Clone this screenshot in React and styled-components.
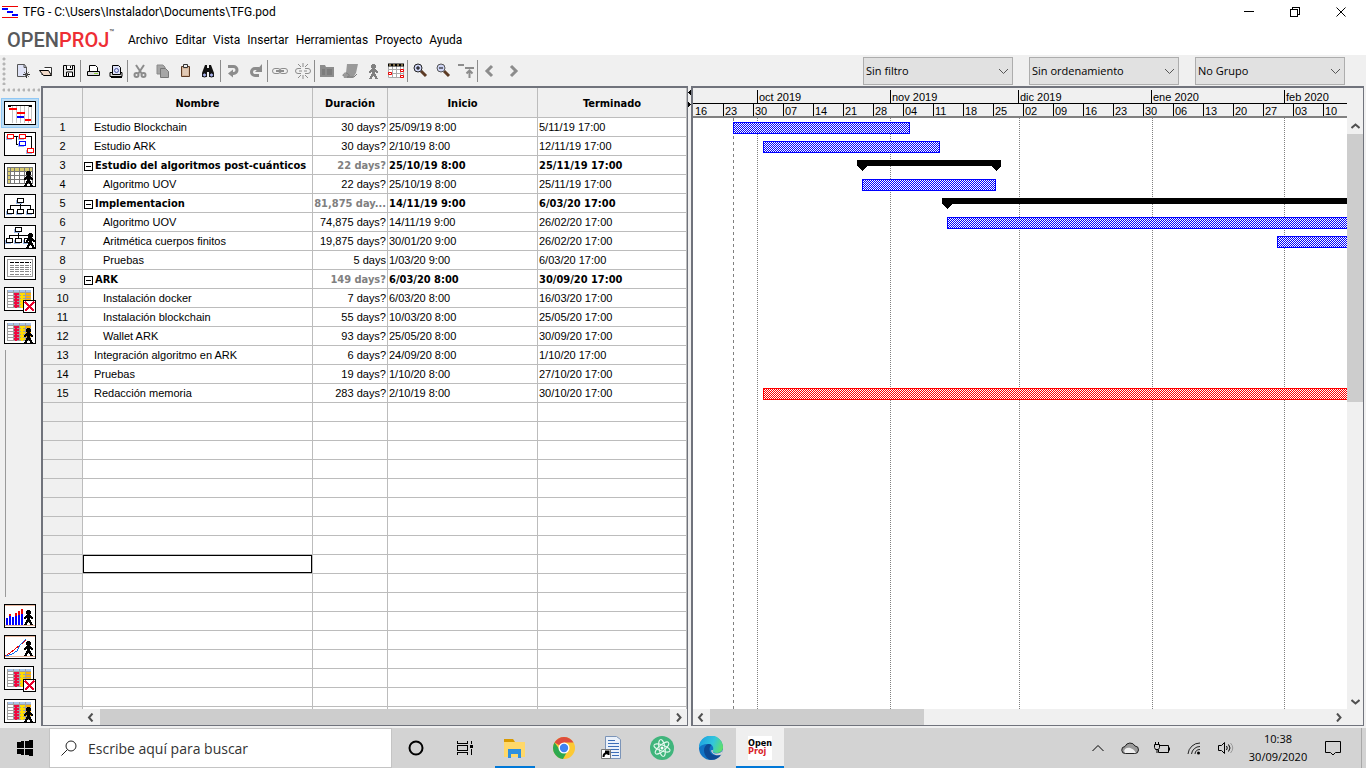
import React from "react";
import styled, { createGlobalStyle, css } from "styled-components";

const uiFont = '"Open Sans", "Noto Sans", sans-serif';
const menuFont = 'Roboto, "Open Sans", sans-serif';
const gridFont = '"Liberation Sans", Roboto, sans-serif';
const boldFont = '"DejaVu Sans Condensed", "Noto Sans", sans-serif';

const GlobalStyle = createGlobalStyle`
  *, *::before, *::after { box-sizing: border-box; }
  body { margin: 0; background: #f0f0f0; color: #000; font-family: ${uiFont}; }
  button, input, select { font: inherit; color: inherit; margin: 0; }
  svg { display: block; }
`;

/* ---------- shell ---------- */

const Shell = styled.div`
  display: flex;
  flex-direction: column;
  height: 100vh;
  overflow: hidden;
`;

const PlainButton = styled.button`
  display: flex;
  align-items: center;
  justify-content: center;
  padding: 0;
  border: 0;
  background: transparent;
`;

const TitleBar = styled.header`
  display: flex;
  align-items: center;
  height: 24px;
  padding: 0 2px;
  background: #fff;
`;

const WindowTitle = styled.h1`
  flex: 1;
  margin: 0 0 0 5px;
  font-family: ${menuFont};
  font-size: 12px;
  font-weight: 400;
  line-height: 24px;
`;

const WindowButton = styled(PlainButton)`
  width: 46px;
  height: 22px;
`;

const MenuBar = styled.nav`
  display: flex;
  align-items: center;
  height: 31px;
  padding-left: 7px;
  background: #fff;
`;

const Logo = styled.div`
  display: flex;
  width: 117px;
  font-family: Roboto, sans-serif;
  font-size: 20px;
  font-weight: 500;
  line-height: 34px;
  color: #58595b;
  span { color: #ee2e34; }
  sup { font-size: 8px; line-height: 20px; }
`;

const MenuItem = styled(PlainButton)`
  padding: 0 3px 0 4px;
  height: 24px;
  font-family: ${menuFont};
  font-size: 12px;
`;

/* ---------- toolbar ---------- */

const Toolbar = styled.div`
  display: flex;
  align-items: center;
  height: 31px;
  flex: none;
  background: #f0f0f0;
`;

const Grip = styled.div`
  flex: none;
  width: ${(p) => (p.$flat ? "40px" : "11px")};
  height: ${(p) => (p.$flat ? "10px" : "28px")};
  background: radial-gradient(circle at 4px 2px, #b4b4b4 1px, transparent 2px);
  background-size: ${(p) => (p.$flat ? "5px 10px" : "12px 5px")};
`;

const ToolGroup = styled.div`
  display: flex;
  align-items: center;
  border-right: 1px solid ${(p) => (p.$last ? "transparent" : "#8c8c8c")};
  height: 22px;
`;

const ToolButton = styled(PlainButton)`
  width: 23px;
  height: 22px;
`;

const Filters = styled.div`
  display: flex;
  gap: 16px;
  margin-left: auto;
  padding-right: 21px;
`;

const SelectBox = styled.div`
  position: relative;
  width: 150px;
  height: 28px;
  svg { position: absolute; right: 4px; top: 11px; pointer-events: none; }
`;

const Select = styled.select`
  appearance: none;
  width: 100%;
  height: 100%;
  padding: 0 20px 0 2px;
  border: 1px solid #adadad;
  border-radius: 0;
  background: #e1e1e1;
  font-size: 11px;
`;

/* ---------- workspace ---------- */

const Workspace = styled.main`
  flex: 1;
  display: grid;
  grid-template-columns: 41px 647px 3px minmax(0, 1fr);
  min-height: 0;
  padding: 0 2px 2px 0;
`;

const Rail = styled.aside`
  display: flex;
  flex-direction: column;
  align-items: flex-start;
  padding-top: 2px;
`;

const RailButton = styled(PlainButton)`
  flex: none;
  width: 38px;
  height: ${(p) => (p.$tall ? "33px" : "31px")};
  align-items: flex-start;
  padding-top: 3px;
  margin-left: 1px;
  &:last-child { height: 30px; }
  ${(p) => p.$active && css`
    padding-top: 2px;
    height: 30px;
    margin-bottom: 1px;
    background: #bcdcf4;
    border: 1px solid #90c8f6;
  `}
`;

const RailRule = styled.div`
  flex: 1;
  width: 1px;
  margin: 2px 0 4px 5px;
  background: #9a9a9a;
`;

const Panel = styled.section`
  display: flex;
  flex-direction: column;
  min-width: 0;
  min-height: 0;
  border: solid #70737c;
  border-width: 2px 1px 1px 2px;
  background: #fff;
`;

const Splitter = styled.div`
  display: flex;
  flex-direction: column;
  gap: 5px;
  padding-top: 3px;
`;

const SheetView = styled.div`
  flex: 1;
  min-height: 0;
  overflow: hidden;
`;

const Sheet = styled.table`
  width: 100%;
  table-layout: fixed;
  border-collapse: separate;
  border-spacing: 0;
  font-family: ${gridFont};
  font-size: 11px;
  line-height: 18px;
`;

const cell = css`
  height: 19px;
  padding: 0 1px;
  overflow: hidden;
  white-space: nowrap;
  border-right: 1px solid #bcbcbc;
  border-bottom: 1px solid #bcbcbc;
`;

const boldText = css`
  padding-top: 2px;
  font-family: ${boldFont};
  font-weight: 700;
  line-height: 16px;
`;

const HeadCell = styled.th`
  ${cell}
  ${boldText}
  height: 30px;
  background: #f0f0f0;
`;

const RowNumber = styled.th`
  ${cell}
  background: #f0f0f0;
  font-weight: 400;
  text-align: center;
`;

const Cell = styled.td`
  ${cell}
  text-align: ${(p) => (p.$right ? "right" : "left")};
  ${(p) => p.$bold && boldText}
  ${(p) => p.$muted && "color: #808080;"}
`;

const TaskName = styled.div`
  display: flex;
  align-items: center;
  gap: 2px;
  padding-left: ${(p) => [0, 10, 19][p.$level]}px;
`;

const Toggle = styled(PlainButton)`
  flex: none;
  width: 9px;
  height: 9px;
  border: 1px solid #000;
  background: linear-gradient(#000, #000) center / 5px 1px no-repeat #fff;
`;

const CellEditor = styled.input`
  display: block;
  width: calc(100% + 2px);
  height: 18px;
  margin: 0 -1px;
  padding: 0 2px;
  border: 1px solid #000;
  outline: 0;
`;

/* ---------- scroll bars ---------- */

const HScroll = styled.div`
  display: flex;
  align-items: center;
  flex: none;
  height: 16px;
  margin-left: ${(p) => (p.$indent ? "40px" : "0")};
  padding-right: ${(p) => (p.$corner ? "16px" : "0")};
  background: #f0f0f0;
`;

const HScrollRow = styled.div`
  flex: none;
  background: #f0f0f0;
`;

const Track = styled.div`
  flex: 1;
  align-self: stretch;
  display: flex;
`;

const Thumb = styled.div`
  background: #cdcdcd;
  flex: 0 0 ${(p) => p.$size};
`;

const ScrollButton = styled(PlainButton)`
  width: 17px;
  height: 16px;
  flex: none;
`;

const VScroll = styled.div`
  display: flex;
  flex-direction: column;
  width: 16px;
  flex: none;
  background: #f0f0f0;
`;

const VTrack = styled.div`
  flex: 1;
  display: flex;
  flex-direction: column;
`;

/* ---------- gantt ---------- */

const GanttBody = styled.div`
  flex: 1;
  display: flex;
  min-height: 0;
`;

const Timeline = styled.div`
  flex: none;
  display: flex;
  background: #f0f0f0;
  padding-right: 16px;
  font-family: ${gridFont};
  font-size: 11px;
`;

const Scale = styled.div`
  flex: 1;
  min-width: 0;
  overflow: hidden;
  border-bottom: 2px solid #808080;
`;

const Months = styled.div`
  display: flex;
  height: 16px;
  padding-top: 2px;
  border-bottom: 1px solid #000;
  line-height: 14px;
`;

const Weeks = styled.div`
  display: flex;
  height: 12px;
  line-height: 14px;
`;

const Tick = styled.div`
  flex: 0 0 ${(p) => p.$width}px;
  padding-left: 1px;
  white-space: nowrap;
  border-left: 1px solid ${(p) => (p.$blank ? "transparent" : "#000")};
`;

const ChartArea = styled.div`
  flex: 1;
  min-width: 0;
  overflow: hidden;
`;

/* ---------- task bar ---------- */

const TaskBar = styled.footer`
  display: flex;
  flex: none;
  height: 40px;
  background: #d3d3d3;
`;

const StartButton = styled(PlainButton)`
  width: 49px;
`;

const Search = styled.label`
  display: flex;
  align-items: center;
  gap: 11px;
  width: 343px;
  padding-left: 11px;
  background: #fff;
  border: 1px solid #c4c4c4;
  input {
    flex: 1;
    min-width: 0;
    border: 0;
    outline: 0;
    padding: 0;
    background: transparent;
    font-size: 14px;
  }
  input::placeholder { color: #333; opacity: 1; }
`;

const Apps = styled.div`
  display: flex;
  gap: 1px;
  margin-left: ${(p) => (p.$spaced ? "2px" : "0")};
`;

const AppButton = styled(PlainButton)`
  width: 48px;
  height: 40px;
  background: ${(p) => (p.$active ? "#efefef" : "transparent")};
  background-image: ${(p) => (p.$running ? "linear-gradient(#0078d7, #0078d7)" : "none")};
  background-repeat: no-repeat;
  background-position: center bottom;
  background-size: ${(p) => (p.$active ? "48px" : "40px")} 2px;
`;

const OpenProjTile = styled.span`
  display: flex;
  flex-direction: column;
  width: 24px;
  height: 24px;
  padding-top: 3px;
  background: #fff;
  font-family: "DejaVu Sans Condensed", "Noto Sans", sans-serif;
  font-size: 9px;
  font-weight: 700;
  line-height: 8px;
  text-align: left;
  b { color: #d9232a; }
`;

const Tray = styled.div`
  display: flex;
  align-items: center;
  margin-left: auto;
`;

const TrayButton = styled(PlainButton)`
  width: 32px;
  height: 40px;
`;

const Clock = styled.time`
  width: 72px;
  margin-right: 3px;
  font-size: 11px;
  line-height: 18px;
  text-align: center;
`;

const Peek = styled.div`
  width: 5px;
  align-self: stretch;
  border-left: 1px solid #a8a8a8;
  margin-left: 12px;
`;

/* ---------- drawings ---------- */

const Icon = ({ w = 16, h = 16, crisp, children }) => (
  <svg width={w} height={h} viewBox={`0 0 ${w} ${h}`} fill="none" aria-hidden="true"
    shapeRendering={crisp ? "crispEdges" : "auto"}>{children}</svg>
);

const chevrons = {
  left: "M5.500 .5L2 4.500l3.500 4",
  right: "M3 .5l3.500 4L3 8.500",
  up: "M.5 6l4-3.500 4 3.500",
  down: "M.5 3l4 3.500 4-3.500",
};
const Chevron = ({ to, width = 2, color = "#505050" }) => (
  <Icon w={9} h={9}><path d={chevrons[to]} stroke={color} strokeWidth={width} /></Icon>
);

const G = "#8c8c8c";

const Man = ({ x = 0, y = 0, fill = "#000" }) => (
  <path
    transform={`translate(${x} ${y})`}
    fill={fill}
    d="M3 0h3v1H3zM2 1h5v3H2zM3 4h3v1H3zM2 5h5v1H2zM1 6h7v1H1zM0 7h9v1H0zM0 8h2v1H0zM3 8h3v2H3zM7 8h2v1H7zM2 10h5v2H2zM1 12h3v1H1zM5 12h3v1H5zM1 13h2v1H1zM6 13h2v1H6zM0 14h3v1H0zM6 14h3v1H6z"
  />
);

const PrinterBase = () => (
  <>
    <path d="M2 9.500h12v4H2z" fill="#dcdcdc" stroke="#000" />
    <path d="M3 14.500h11" stroke="#000" />
  </>
);

const tools = {
  nuevo: <><path d="M2.500 1.500h7l2 3v9h-9z" fill="#dfe3f7" stroke="#555" /><path d="M9 1.500v3h3" stroke="#555" /><path d="M11.500 8v7M8 11.500h7" stroke="#333" /><path d="M9 9l5 5M14 9l-5 5" stroke="#777" /></>,
  abrir: <><path d="M6.500 4.500h7v7h-10" stroke="#333" fill="#fff" /><path d="M1.500 7.500h9l3 5h-8z" fill="#f1d9c8" stroke="#000" /></>,
  guardar: <><path d="M2.500 2.500h11v11h-11z" fill="#e8e8e8" stroke="#000" /><path d="M5.500 2.500v4h6v-4M5.500 13v-4h6v4" fill="#fff" stroke="#000" /><path d="M9.500 3v2M7.500 10v3" stroke="#000" /></>,
  imprimir: <><path d="M4.500 8V2.500h6l2 2V8" fill="#fff" stroke="#000" /><path d="M2.500 8.500h12v4h-12z" fill="#dcdcdc" stroke="#000" /><path d="M9 10.500h4" stroke="#8ccf3c" strokeWidth="1" /></>,
  previa: <><PrinterBase /><path d="M4.500 2.500h6l2 2v7h-8z" fill="#dfe3f7" stroke="#000" /><circle cx="8.500" cy="7.500" r="2" stroke="#4a55a0" /></>,
  cortar: <><path d="M4 2l6 9M12 2L6 11" stroke={G} strokeWidth="2" /><circle cx="4.500" cy="12" r="2" stroke={G} strokeWidth="2" /><circle cx="11.500" cy="12" r="2" stroke={G} strokeWidth="2" /></>,
  copiar: <><path d="M2 2h6l2 2v7H2z" fill="#a6a6a6" stroke={G} /><path d="M5.500 5.500h5l3 3v6h-8z" fill="#a6a6a6" stroke="#777" /></>,
  pegar: <><path d="M3.500 3.500h8v10h-8z" fill="#d6b79c" stroke="#5c3a24" /><path d="M5.500 1.500h4v3h-4z" fill="#eee" stroke="#333" /><path d="M5 7h5M5 9h5M5 11h5" stroke="#ecdccf" /></>,
  buscar: <><path d="M4 2h2v3h2V2h2l3 8v4H8V9H6v5H1v-4z" fill="#111" /><circle cx="3.500" cy="12" r="2" fill="#aab4f0" stroke="#111" /><circle cx="10.500" cy="12" r="2" fill="#aab4f0" stroke="#111" /></>,
  deshacer: <><path d="M3 3.500h5.500a3.500 3.500 0 010 7H6" stroke={G} strokeWidth="3" /><path d="M3 10.500l5-4v8z" fill={G} /></>,
  rehacer: <><path d="M11 12.500H7a3.500 3.500 0 010-7h4" stroke={G} strokeWidth="3" /><path d="M14 1v8H7z" fill={G} /></>,
  vincular: <><rect x="0.500" y="5.500" width="8" height="5" rx="2.500" stroke={G} /><rect x="7.500" y="5.500" width="8" height="5" rx="2.500" stroke={G} /><path d="M4 8h8" stroke={G} strokeWidth="2" /></>,
  desvincular: <><path d="M6 5.500H3a2.500 2.500 0 000 5h3M10 5.500h3a2.500 2.500 0 010 5h-3M4 8h3M9 8h3M8 0v4M8 12v4M3 1l3 3M13 1l-3 3M3 15l3-3M13 15l-3-3" stroke={G} /></>,
  informacion: <><path d="M1 2h5l1 2h8v10H1z" fill={G} /><path d="M3 7h3M8 7h5M3 9h3M8 9h5M3 11h3M8 11h5" stroke="#6d6d6d" /></>,
  notas: <><path d="M5 1h11l-2 9-3 5H2l-1-3 3-2z" fill="#999" /><path d="M1 13c0-3 3-4 5-2 2 1 1 3-1 3h7l3-3" stroke="#7c7c7c" /></>,
  recursos: <Man x={4} y={1} fill="#808080" />,
  calendario: <><path d="M.5 2.500h15v12H.5z" fill="#fff" stroke="#aaa" /><path d="M0 6.500h16M0 10.500h16M4.500 3v12M8.500 3v12M12.500 3v12" stroke="#aaa" /><path d="M0 2h16" stroke="#000" strokeWidth="3" /><path d="M1 2h14" stroke="#f5d58c" strokeDasharray="2 2" /><path d="M.5 9.500h3v2h-3zM12.500 6.500h3v2h-3zM12.500 12.500h3v2h-3z" stroke="#e00" fill="#fff" /></>,
  acercar: <><path d="M9 8l5 5" stroke="#5c3a24" strokeWidth="3" /><circle cx="6" cy="5" r="4" fill="#cdd3f4" stroke="#222" /><path d="M4 5h4M6 3v4" stroke="#000" /></>,
  alejar: <><path d="M9 8l5 5" stroke="#5c3a24" strokeWidth="3" /><circle cx="6" cy="5" r="4" fill="#cdd3f4" stroke="#555" /><path d="M4 5h4" stroke="#000" /></>,
  desplazar: <path d="M0 2h6M7 5h9M11.500 7v8M8.500 10.500l3-3 3 3" stroke={G} strokeWidth="2" />,
  anterior: <path d="M10 3L5 8l5 5" stroke={G} strokeWidth="3" />,
  siguiente: <path d="M6 3l5 5-5 5" stroke={G} strokeWidth="3" />,
};

const toolGroups = [
  ["nuevo", "abrir", "guardar"],
  ["imprimir", "previa"],
  ["cortar", "copiar", "pegar", "buscar"],
  ["deshacer", "rehacer"],
  ["vincular", "desvincular"],
  ["informacion", "notas", "recursos", "calendario"],
  ["acercar", "alejar", "desplazar"],
  ["anterior", "siguiente"],
];

const Frame = ({ children, h = 24, w = 32 }) => (
  <Icon w={32} h={h} crisp>
    <rect x="0.5" y="0.5" width={w - 1} height="23" fill="#fff" stroke="#000" />
    {children}
  </Icon>
);

const Node = ({ x, y, c = "#000" }) => (
  <>
    <rect x={x - 1} y={y + 2} width="6" height="4" fill="#9db9e6" />
    <rect x={x + 0.5} y={y + 0.5} width="6" height="4" fill="#fff" stroke={c} />
  </>
);

const UsageGrid = () => (
  <>
    <path d="M3 3h24v18H3z" fill="#a0a0a0" />
    <path d="M4 4h5M10 4h5M16 4h5M22 4h5" stroke="#a8c4ea" strokeWidth="2" />
    {[["#fff", 4], ["#f00840", 10], ["#ffdc00", 16], ["#ffb000", 22]].map(([fill, x]) =>
      [6, 9, 12, 15, 18].map((y) => <rect key={`${x}-${y}`} x={x} y={y} width="5" height="2" fill={fill} />)
    )}
    <path d="M12 6v15" stroke="#f00840" strokeWidth="2" />
    <path d="M18 6v15" stroke="#ffdc00" strokeWidth="2" />
  </>
);

const Cross = () => (
  <>
    <rect x="19.500" y="13.500" width="12" height="12" fill="#fff" stroke="#000" />
    <path d="M21 15l9 9M30 15l-9 9" stroke="#e8002c" strokeWidth="2" />
  </>
);

const Tree = () => (
  <>
    <path d="M16.500 8v3M6.500 15v-4h20v4M16.500 11v4" stroke="#000" />
    <Node x={13} y={4} /><Node x={3} y={15} /><Node x={13} y={15} /><Node x={23} y={15} />
  </>
);

const views = {
  gantt: <Frame><path d="M8.500 5v17M12.500 5v17M16.500 5v17M20.500 5v17M24.500 5v17M27.500 5v17" stroke="#c4c4c4" /><path d="M4 4.500h24" stroke="#000" /><path d="M4 4h3v2H4zM25 4h3v2h-3z" fill="#000" /><path d="M5 8h8M13 12h8M21 19h6" stroke="#f00" strokeWidth="2" /><path d="M13 16h7" stroke="#00f" strokeWidth="2" /></Frame>,
  red: <Frame><path d="M9 4.500h6M12.500 5v7h3M22 4.500h5v12" stroke="#000" /><Node x={3} y={2} c="#f00" /><Node x={15} y={2} c="#f00" /><Node x={15} y={9} c="#00f" /><Node x={23} y={16} c="#f00" /></Frame>,
  recursos: <Frame><path d="M3 4h26v4H3zM3 4h3v17H3z" fill="#d8cc70" /><path d="M3 4.500h26M3 8.500h26M3 12.500h26M3 16.500h26M3 20.500h26M3.500 4v17M6.500 4v17M10.500 4v17M15.500 4v17M20.500 4v17M25.500 4v17M28.500 4v17" stroke="#777" /><Man x={20} y={8} /></Frame>,
  edt: <Frame><Tree /></Frame>,
  edr: <Frame><path d="M14.500 7v3M5.500 14v-4h19v4M14.500 10v4" stroke="#000" /><Node x={11} y={2} /><Node x={2} y={13} /><Node x={11} y={13} /><Node x={20} y={13} /><Man x={22} y={8} /></Frame>,
  informe: <Frame><path d="M3.500 3.500h25v17h-25z" stroke="#999" /><path d="M6 6.500h21" stroke="#000" strokeDasharray="4 1" /><path d="M6 9.500h21M6 11.500h21M6 13.500h21M6 15.500h21M6 18.500h21" stroke="#888" strokeDasharray="4 1" /></Frame>,
  usoTareas: <Frame h={26} w={30}><UsageGrid /><Cross /></Frame>,
  usoRecursos: <Frame><UsageGrid /><Man x={20} y={8} /></Frame>,
  histograma: <Frame><path d="M1 1.500h30M1 21.500h30" stroke="#e8b8a0" /><path d="M3 21v-7M6 21V12M9 21v-8M12 21V12M15 21V11M18 21V10" stroke="#00f" strokeWidth="2" /><path d="M6 12v-2M12 12V9M15 11V7M18 10V5" stroke="#e00" strokeWidth="2" /><Man x={20} y={6} /></Frame>,
  graficos: <Frame><path d="M1 1.500h30M1 21.500h30" stroke="#e8b8a0" /><path d="M1 21l5-3 5-4 5-4 6-5" stroke="#e00" /><path d="M2 21l6-2 5-3 3-6 6-6" stroke="#0a6cf0" /><Man x={20} y={6} /></Frame>,
};

const ViewButton = ({ name, active, tall, icon }) => (
  <RailButton aria-label={name} $active={active} $tall={tall}>{views[icon || name]}</RailButton>
);

/* ---------- data ---------- */

const tasks = [
  ["Estudio Blockchain", "30 days?", "25/09/19 8:00", "5/11/19 17:00", 1],
  ["Estudio ARK", "30 days?", "2/10/19 8:00", "12/11/19 17:00", 1],
  ["Estudio del algoritmos post-cuánticos", "22 days?", "25/10/19 8:00", "25/11/19 17:00", 0],
  ["Algoritmo UOV", "22 days?", "25/10/19 8:00", "25/11/19 17:00", 2],
  ["Implementacion", "81,875 day...", "14/11/19 9:00", "6/03/20 17:00", 0],
  ["Algoritmo UOV", "74,875 days?", "14/11/19 9:00", "26/02/20 17:00", 2],
  ["Aritmética cuerpos finitos", "19,875 days?", "30/01/20 9:00", "26/02/20 17:00", 2],
  ["Pruebas", "5 days", "1/03/20 9:00", "6/03/20 17:00", 2],
  ["ARK", "149 days?", "6/03/20 8:00", "30/09/20 17:00", 0],
  ["Instalación docker", "7 days?", "6/03/20 8:00", "16/03/20 17:00", 2],
  ["Instalación blockchain", "55 days?", "10/03/20 8:00", "25/05/20 17:00", 2],
  ["Wallet ARK", "93 days?", "25/05/20 8:00", "30/09/20 17:00", 2],
  ["Integración algoritmo en ARK", "6 days?", "24/09/20 8:00", "1/10/20 17:00", 1],
  ["Pruebas", "19 days?", "1/10/20 8:00", "27/10/20 17:00", 1],
  ["Redacción memoria", "283 days?", "2/10/19 8:00", "30/10/20 17:00", 1],
];
const blankRows = Array.from({ length: 17 }, (_, i) => i);
const editedRow = 8;

const months = [["", 64], ["oct 2019", 133], ["nov 2019", 128], ["dic 2019", 133], ["ene 2020", 133], ["feb 2020", 133]];
const weeks = "16 23 30 07 14 21 28 04 11 18 25 02 09 16 23 30 06 13 20 27 03 10".split(" ");

const bars = [
  { row: 0, from: 40, to: 217 },
  { row: 1, from: 70, to: 247 },
  { row: 2, from: 164, to: 308, summary: true },
  { row: 3, from: 169, to: 303 },
  { row: 4, from: 249, to: 1400, summary: true },
  { row: 5, from: 254, to: 1400 },
  { row: 6, from: 584, to: 1400 },
  { row: 14, from: 70, to: 1400, critical: true },
];

const Chart = () => (
  <svg width="1400" height="900" shapeRendering="crispEdges" role="img" aria-label="Diagrama de Gantt">
    <defs>
      {[["normal", "#00f"], ["critical", "#f00"]].map(([id, c]) => (
        <pattern key={id} id={id} width="2" height="2" patternUnits="userSpaceOnUse">
          <rect width="2" height="2" fill="#fff" />
          <rect width="1" height="1" fill={c} />
          <rect x="1" y="1" width="1" height="1" fill={c} />
        </pattern>
      ))}
    </defs>
    <path d="M40.500 0v900" stroke="#808080" strokeDasharray="3 3" />
    {[64, 197, 326, 459, 591].map((x) => (
      <path key={x} d={`M${x}.5 0v900`} stroke="#808080" strokeDasharray="1 1" />
    ))}
    {bars.map(({ row, from, to, summary, critical }) => {
      const y = row * 19 + 4;
      if (summary) {
        return (
          <path key={row} d={`M${from} ${y}H${to}v6l-5 5l-5 -5H${from + 10}l-5 5l-5 -5z`} fill="#000" />
        );
      }
      return (
        <rect key={row} x={from + 0.5} y={y + 0.5} width={to - from - 1} height="11"
          fill={critical ? "url(#critical)" : "url(#normal)"} stroke={critical ? "#f00" : "#00f"} />
      );
    })}
  </svg>
);

const apps = {
  explorer: <Icon w={24} h={24}><path d="M1 4h9l2 2h10v15H1z" fill="#ffd869" /><path d="M1 3h9l2 3H1z" fill="#d99a00" /><path d="M5 13h13v9h-3v-4H8v4H5z" fill="#2e8fdf" /></Icon>,
  chrome: <Icon w={24} h={24}><circle cx="12" cy="12" r="11" fill="#fcc934" /><path d="M12 12L2.500 6.500A11 11 0 0121.500 6.500H12z" fill="#de4d3e" /><path d="M2.500 6.500A11 11 0 0011 23l5-9-4-2-4 2z" fill="#2da94f" /><circle cx="12" cy="12" r="5.500" fill="#fff" /><circle cx="12" cy="12" r="4.200" fill="#3f83f1" /></Icon>,
  writer: <Icon w={24} h={24}><path d="M4.500 .5h11l4 3v19h-15z" fill="#eaf1fb" stroke="#7b94b8" /><path d="M7 4.500h7M7 7.500h11M7 10.500h11M7 13.500h11M9 16.500h9M11 19.500h7" stroke="#3c6eb8" /><path d="M.5 13.500h9v9h-9z" fill="#fff" stroke="#777" /><path d="M2.500 21c0-3 1-4 4-4M4 15.500h3.500V19" stroke="#000" strokeWidth="2" /></Icon>,
  atom: <Icon w={24} h={24}><circle cx="12" cy="12" r="12" fill="#40b57c" /><g stroke="#e4f8ee"><ellipse cx="12" cy="12" rx="8.500" ry="3" transform="rotate(20 12 12)" /><ellipse cx="12" cy="12" rx="8.500" ry="3" transform="rotate(80 12 12)" /><ellipse cx="12" cy="12" rx="8.500" ry="3" transform="rotate(140 12 12)" /></g><circle cx="12" cy="12" r="1.500" fill="#fff" /></Icon>,
  edge: (
    <Icon w={24} h={24}>
      <defs>
        <linearGradient id="edgeTop" x1="0" y1="0" x2="24" y2="10" gradientUnits="userSpaceOnUse"><stop stopColor="#1b9de2" /><stop offset=".6" stopColor="#33c6dc" /><stop offset="1" stopColor="#5fe06a" /></linearGradient>
      </defs>
      <circle cx="12" cy="12" r="12" fill="#1173c4" />
      <path d="M0 12A12 12 0 0124 11c0 4-3 6-7 6-3 0-4-1-3-3 1-3-1-6-5-6-5 0-8 2-9 4z" fill="url(#edgeTop)" />
      <path d="M9 8c-5 2-6 10 1 15.500A12 12 0 0022.500 18c-6 3-12 1-12-5 0-2 1-3 2-4-1-1-2-1-3.500-1z" fill="#0d4a94" />
      <path d="M14 14c-1 2 0 3.500 3 3.500 3.500 0 6-1.500 7-4l-1 5c-5 2-10 0-11-4z" fill="#d3d3d3" />
    </Icon>
  ),
};

const Scroller = ({ thumb, label }) => (
  <>
    <ScrollButton aria-label={`${label} a la izquierda`}><Chevron to="left" /></ScrollButton>
    <Track><Thumb $size={thumb} /></Track>
    <ScrollButton aria-label={`${label} a la derecha`}><Chevron to="right" /></ScrollButton>
  </>
);

const Filter = ({ label, value }) => (
  <SelectBox>
    <Select aria-label={label} defaultValue={value}><option>{value}</option></Select>
    <Icon w={11} h={7}><path d="M1 1l4.500 4.500L10 1" stroke="#555" /></Icon>
  </SelectBox>
);

export default function App() {
  return (
    <Shell>
      <GlobalStyle />
      <TitleBar>
        <Icon w={16} h={16} crisp><path d="M0 2.500h16M0 13.500h16" stroke="#e00" /><path d="M0 5h6M5 8h6M10 11h6" stroke="#00f" strokeWidth="2" /></Icon>
        <WindowTitle>TFG - C:\Users\Instalador\Documents\TFG.pod</WindowTitle>
        <WindowButton aria-label="Minimizar"><Icon w={11} h={11} crisp><path d="M0 4.500h10" stroke="#000" /></Icon></WindowButton>
        <WindowButton aria-label="Restaurar"><Icon w={11} h={11} crisp><path d="M.5 2.500h7v7h-7zM2.500 2V.5h7v7H8" stroke="#000" /></Icon></WindowButton>
        <WindowButton aria-label="Cerrar"><Icon w={11} h={11}><path d="M.5 .5l9 9M9.500 .5l-9 9" stroke="#000" /></Icon></WindowButton>
      </TitleBar>
      <MenuBar>
        <Logo>OPEN<span>PROJ</span><sup>™</sup></Logo>
        {["Archivo", "Editar", "Vista", "Insertar", "Herramientas", "Proyecto", "Ayuda"].map((m) => (
          <MenuItem key={m}>{m}</MenuItem>
        ))}
      </MenuBar>
      <Toolbar>
        <Grip />
        {toolGroups.map((group, i) => (
          <ToolGroup key={group[0]} $last={i === toolGroups.length - 1}>
            {group.map((name) => (
              <ToolButton key={name} aria-label={name}><Icon>{tools[name]}</Icon></ToolButton>
            ))}
          </ToolGroup>
        ))}
        <Filters>
          <Filter label="Filtro" value="Sin filtro" />
          <Filter label="Orden" value="Sin ordenamiento" />
          <Filter label="Grupo" value="No Grupo" />
        </Filters>
      </Toolbar>

      <Workspace>
        <Rail>
          <Grip $flat />
          <ViewButton name="gantt" active />
          <ViewButton name="red" />
          <ViewButton name="recursos" />
          <ViewButton name="edt" />
          <ViewButton name="edr" />
          <ViewButton name="informe" />
          <ViewButton name="usoTareas" tall />
          <ViewButton name="usoRecursos" />
          <RailRule />
          <ViewButton name="histograma" />
          <ViewButton name="graficos" />
          <ViewButton name="detalle de tareas" icon="usoTareas" tall />
          <ViewButton name="detalle de recursos" icon="usoRecursos" />
        </Rail>

        <Panel>
          <SheetView>
            <Sheet>
              <colgroup>
                <col style={{ width: 40 }} /><col style={{ width: 230 }} /><col style={{ width: 75 }} />
                <col style={{ width: 150 }} /><col />
              </colgroup>
              <thead>
                <tr>
                  <HeadCell aria-label="Fila" />
                  {["Nombre", "Duración", "Inicio", "Terminado"].map((h) => <HeadCell key={h} scope="col">{h}</HeadCell>)}
                </tr>
              </thead>
              <tbody>
                {tasks.map(([name, duration, start, end, level], i) => {
                  const bold = level === 0;
                  return (
                    <tr key={i}>
                      <RowNumber scope="row">{i + 1}</RowNumber>
                      <Cell $bold={bold}>
                        <TaskName $level={level}>{bold && <Toggle aria-label="Contraer" />}{name}</TaskName>
                      </Cell>
                      <Cell $bold={bold} $muted={bold} $right>{duration}</Cell>
                      <Cell $bold={bold}>{start}</Cell>
                      <Cell $bold={bold}>{end}</Cell>
                    </tr>
                  );
                })}
                {blankRows.map((i) => (
                  <tr key={i}>
                    <RowNumber />
                    <Cell>{i === editedRow && <CellEditor aria-label="Nombre de la tarea" />}</Cell>
                    <Cell /><Cell /><Cell />
                  </tr>
                ))}
              </tbody>
            </Sheet>
          </SheetView>
          <HScrollRow><HScroll $indent><Scroller thumb="100%" label="Tabla" /></HScroll></HScrollRow>
        </Panel>

        <Splitter>
          <Icon w={3} h={7} crisp><path d="M3 0v7L0 3.500z" fill="#000" /></Icon>
          <Icon w={3} h={7} crisp><path d="M0 0v7l3-3.500z" fill="#000" /></Icon>
        </Splitter>

        <Panel>
          <Timeline>
            <Scale>
              <Months>{months.map(([m, w]) => <Tick key={m} $width={w} $blank={!m}>{m}</Tick>)}</Months>
              <Weeks>{weeks.map((w, i) => <Tick key={i} $width={30} $blank={i === 0}>{w}</Tick>)}</Weeks>
            </Scale>
          </Timeline>
          <GanttBody>
            <ChartArea><Chart /></ChartArea>
            <VScroll>
              <ScrollButton aria-label="Subir"><Chevron to="up" /></ScrollButton>
              <VTrack><Thumb $size="48%" /></VTrack>
              <ScrollButton aria-label="Bajar"><Chevron to="down" /></ScrollButton>
            </VScroll>
          </GanttBody>
          <HScroll $corner><Scroller thumb="34.5%" label="Diagrama" /></HScroll>
        </Panel>
      </Workspace>

      <TaskBar>
        <StartButton aria-label="Inicio"><Icon crisp><path d="M0 2l7-1v6.500H0zM8 1l8-1v7.500H8zM0 8.500h7V15l-7-1zM8 8.500h8V16l-8-1z" fill="#000" /></Icon></StartButton>
        <Search>
          <Icon w={16} h={16}><circle cx="10" cy="6" r="5" stroke="#222" /><path d="M6.500 9.500L.5 15.500" stroke="#222" /></Icon>
          <input placeholder="Escribe aquí para buscar" aria-label="Buscar" />
        </Search>
        <Apps>
          <AppButton aria-label="Cortana"><Icon><circle cx="8" cy="8" r="6.500" stroke="#000" strokeWidth="2" /></Icon></AppButton>
          <AppButton aria-label="Vista de tareas"><Icon w={18} crisp><path d="M1.500 1v2.500h10V1M1.500 5.500h10v5h-10zM1.500 15v-2.500h10V15M15.500 1v3M15.500 9v6" stroke="#000" /><path d="M14 5h3v3h-3z" fill="#000" /></Icon></AppButton>
        </Apps>
        <Apps $spaced>
          <AppButton aria-label="Explorador" $running>{apps.explorer}</AppButton>
          <AppButton aria-label="Chrome">{apps.chrome}</AppButton>
          <AppButton aria-label="Documento">{apps.writer}</AppButton>
          <AppButton aria-label="Atom">{apps.atom}</AppButton>
          <AppButton aria-label="Edge">{apps.edge}</AppButton>
          <AppButton $active $running><OpenProjTile>Open<b>Proj</b></OpenProjTile></AppButton>
        </Apps>
        <Tray>
          <TrayButton aria-label="Iconos ocultos"><Icon w={12} h={8}><path d="M.5 7L6 1.500 11.500 7" stroke="#000" /></Icon></TrayButton>
          <TrayButton aria-label="OneDrive"><Icon w={18} h={12}><path d="M4.500 11.500a3.500 3.500 0 01-.5-7 5.500 5.500 0 0110-.5 3.700 3.700 0 01-.5 7.500z" fill="#999" stroke="#222" /><path d="M4 11a3 3 0 010-4c4-3 9 0 11 4z" fill="#eee" /></Icon></TrayButton>
          <TrayButton aria-label="Batería"><Icon w={18} h={12}><path d="M7 3.500h8.500v7H5.500V8M16.500 5.500v3" stroke="#000" /><path d="M1.500 2.500h5v3l-1 2h-3l-1-2zM2.500 0v2M5.500 0v2M4 7v4" stroke="#000" /></Icon></TrayButton>
          <TrayButton aria-label="Red"><Icon w={14} h={14}><path d="M1 13A12 12 0 0113 2M4.500 13A8.500 8.500 0 0113 5.500M8 13a5 5 0 015-4.500" stroke="#222" /><circle cx="11.500" cy="12" r="1.500" fill="#000" /></Icon></TrayButton>
          <TrayButton aria-label="Volumen"><Icon w={18} h={14}><path d="M1.500 4.500h3l3-3v11l-3-3h-3zM9.500 5q1.500 2 0 4M11.500 3.500q3 3.500 0 7" stroke="#000" /><path d="M13.500 2q4.500 5 0 10" stroke="#999" /></Icon></TrayButton>
          <Clock>10:38<br />30/09/2020</Clock>
          <TrayButton aria-label="Notificaciones"><Icon w={16} h={16}><path d="M.5 1.500h15v11h-5L8 15l-2.500-2.500h-5z" stroke="#000" /></Icon></TrayButton>
          <Peek />
        </Tray>
      </TaskBar>
    </Shell>
  );
}
